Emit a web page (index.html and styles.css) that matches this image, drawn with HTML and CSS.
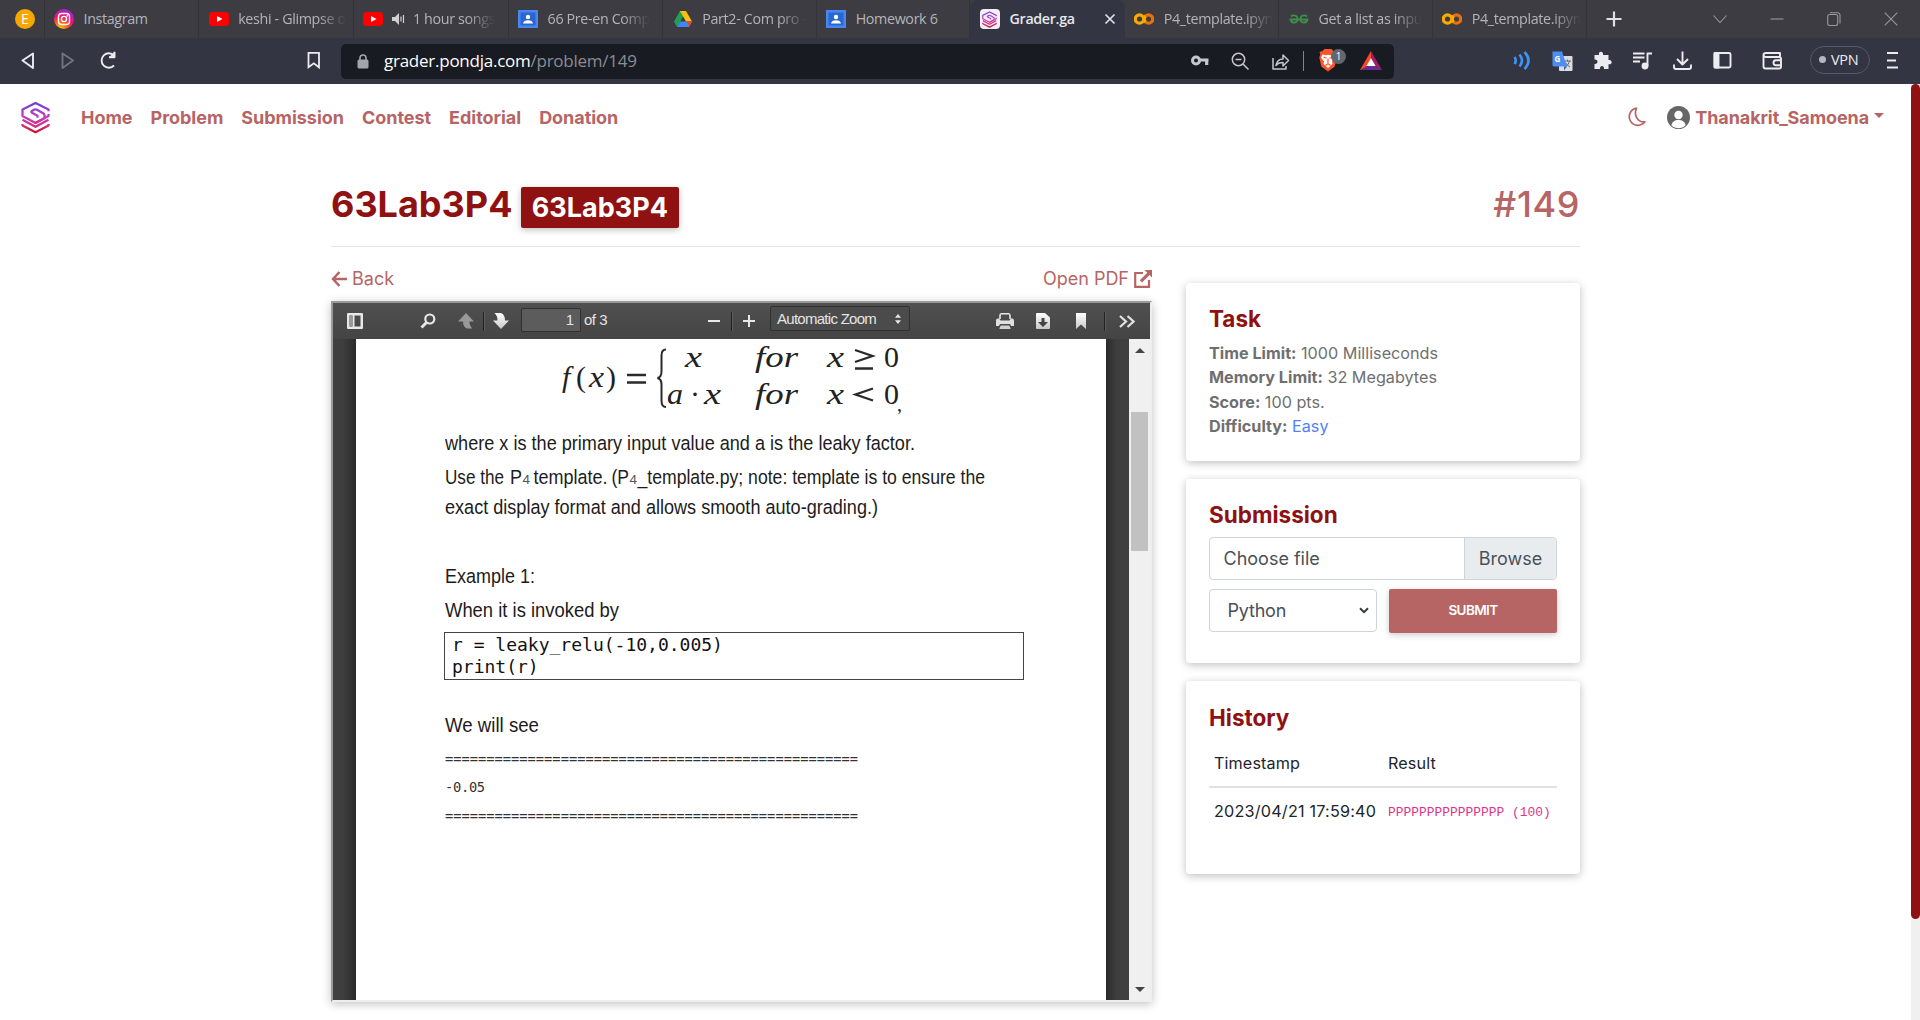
FILE: index.html
```html
<!DOCTYPE html>
<html lang="en">
<head>
<meta charset="utf-8">
<title>Grader.ga</title>
<link rel="stylesheet" href="styles.css">
</head>
<body>
<svg class="defs" width="0" height="0" aria-hidden="true">
  <defs>
    <linearGradient id="logoGrad" x1="0" y1="0" x2="0" y2="32" gradientUnits="userSpaceOnUse"><stop offset="0" stop-color="#6a3fd0"/><stop offset=".5" stop-color="#c43fc0"/><stop offset=".75" stop-color="#d22f7c"/><stop offset="1" stop-color="#c4101c"/></linearGradient>
    <radialGradient id="igGrad" cx=".3" cy="1" r="1.1"><stop offset="0" stop-color="#ffd600"/><stop offset=".35" stop-color="#ff5a1f"/><stop offset=".6" stop-color="#f0107a"/><stop offset="1" stop-color="#8a2be2"/></radialGradient>
    <linearGradient id="btnGrad" x1="0" y1="0" x2="0" y2="1"><stop offset="0" stop-color="#fff"/><stop offset="1" stop-color="#c8c8c8"/></linearGradient>
  </defs>
  <symbol id="logo" viewBox="0 0 29 32"><g fill="none" stroke="url(#logoGrad)" stroke-width="2.300" stroke-linejoin="round"><path d="M27.500 9.800V8L14.500 1.500 1.500 8v6.500l13 7 9-5v-2.800q0-1-1-1.700L16 8.200q-1.500-.8-3 0l-2 1.200q-1.500 1 0 1.800l5.500 3v2"/><path d="M27.500 12.500v2L14.500 21.500"/><path d="M1.500 18.200 14.500 25.300 27.500 18.200"/><path d="M1.500 22.500v1.500L14.500 30.700 27.500 24v-1.500"/></g></symbol>
  <symbol id="youtube" viewBox="0 0 20 20"><rect y="3" width="20" height="14" rx="3.500" fill="#f00"/><path d="M8 7l5.500 3L8 13z" fill="#fff"/></symbol>
  <symbol id="classroom" viewBox="0 0 20 20"><rect y="1" width="20" height="18" fill="#4a86f0"/><rect x="2.500" y="3.500" width="15" height="13" fill="#2a66d0"/><circle cx="10" cy="8" r="2.200" fill="#fff"/><path d="M5 14.500c0-4.500 10-4.500 10 0z" fill="#fff"/></symbol>
  <symbol id="colab" viewBox="0 0 20 20"><g fill="none" stroke-width="3.200"><circle cx="5.500" cy="10" r="4.200" stroke="#f9ab00"/><circle cx="14.500" cy="10" r="4.200" stroke="#e8710a"/><path d="M11.500 13a4.200 4.200 0 0 1 0-6" stroke="#f9ab00"/></g></symbol>
</svg>

<header class="browser">
  <div class="tabs">
    <div class="tab pinned"><span class="letter">E</span></div>
    <div class="tab"><svg class="fav" viewBox="0 0 20 20"><circle cx="10" cy="10" r="10" fill="url(#igGrad)"/><g fill="none" stroke="#fff" stroke-width="1.400"><rect x="4.500" y="4.500" width="11" height="11" rx="3.200"/><circle cx="10" cy="10" r="2.600"/></g><circle cx="13.200" cy="6.900" r=".8" fill="#fff"/></svg><span class="label">Instagram</span></div>
    <div class="tab"><svg class="fav"><use href="#youtube"/></svg><span class="label fade">keshi - Glimpse o</span></div>
    <div class="tab"><svg class="fav"><use href="#youtube"/></svg><svg class="sound" viewBox="0 0 14 14"><path d="M1 5h3l4-4v12L4 9H1z" fill="#d0d0d2"/><path d="M10 4.500v5M12.500 3v8" stroke="#d0d0d2" stroke-width="1.200"/></svg><span class="label fade">1 hour songs</span></div>
    <div class="tab"><svg class="fav"><use href="#classroom"/></svg><span class="label fade">66 Pre-en Comp</span></div>
    <div class="tab narrow"><svg class="fav" viewBox="0 0 20 20"><path d="M7 2h6L7.500 12 4 18 1 12.500z" fill="#22a052"/><path d="M7 2h6l6 10.500h-6z" fill="#ffc107"/><path d="M4 18l3-5.500h12L16 18z" fill="#4285f4"/><path d="M13.500 12.500H19L16 18z" fill="#ea4335"/></svg><span class="label fade">Part2- Com pro -</span></div>
    <div class="tab narrow"><svg class="fav"><use href="#classroom"/></svg><span class="label">Homework 6</span></div>
    <div class="tab active"><span class="logo-tile"><svg width="15" height="17"><use href="#logo"/></svg></span><span class="label">Grader.ga</span><svg class="close" width="12" height="12" viewBox="0 0 12 12"><path d="M1.500 1.500l9 9m0-9l-9 9" stroke="#e2e2e6" stroke-width="1.700"/></svg></div>
    <div class="tab"><svg class="fav"><use href="#colab"/></svg><span class="label fade">P4_template.ipyn</span></div>
    <div class="tab narrow"><svg class="fav" viewBox="0 0 20 20"><g fill="none" stroke="#3d8f49" stroke-width="1.800"><path d="M2 7.500C4 5.500 8.500 6 8.500 10c0 4.500-6 5-7 .5H18.500c-1 4.500-7 4-7-.5 0-4 4.500-4.500 6.500-2.500"/></g></svg><span class="label fade">Get a list as inpu</span></div>
    <div class="tab"><svg class="fav"><use href="#colab"/></svg><span class="label fade">P4_template.ipyn</span></div>
    <svg class="new-tab" width="16" height="16" viewBox="0 0 16 16"><path d="M8 .5v15M.5 8h15" stroke="#e0e0e2" stroke-width="2.200"/></svg>
    <div class="window">
      <svg viewBox="0 0 14 14"><path d="M.5 3.500L7 10.500l6.500-7"/></svg>
      <svg viewBox="0 0 14 14"><path d="M.5 7h13"/></svg>
      <svg viewBox="0 0 14 14"><rect x=".7" y="2.500" width="10" height="11" rx="2"/><path d="M3 .7h7.500a2.500 2.500 0 0 1 2.500 2.500v8.300"/></svg>
      <svg viewBox="0 0 14 14"><path d="M.7.700l12.600 12.600m0-12.600L.7 13.300"/></svg>
    </div>
  </div>
  <div class="toolbar">
    <div class="cells">
      <svg class="cell" viewBox="0 0 40 46"><path d="M25 15.500v14.500L14.500 22.500z"/></svg>
      <svg class="cell dim" viewBox="0 0 40 46"><path d="M14.500 15.500v14.500l10.500-7.500z"/></svg>
      <svg class="cell" viewBox="0 0 40 46"><path d="M26 27.500a7.200 7.200 0 1 1 0-10"/><path d="M26.500 13.800v5.500H21" fill="#ececf0"/></svg>
    </div>
    <svg class="cell bookmark" viewBox="0 0 40 46"><path d="M15.500 14.800h10.500v14.500l-5.200-4-5.300 4z"/></svg>
    <div class="url">
      <svg class="lock" viewBox="0 0 12 15"><rect x=".5" y="5.500" width="11" height="9" rx="1.500" fill="#a4a5ab"/><path d="M3 6V4a3 3 0 0 1 6 0v2" fill="none" stroke="#a4a5ab" stroke-width="1.600"/></svg>
      <span class="address"><b>grader.pondja.com</b>/problem/149</span>
      <div class="cells">
        <svg class="cell" viewBox="0 0 40 46"><g fill="none" stroke="#c6c7cc"><circle cx="16" cy="22.500" r="3.500" stroke-width="3"/><path d="M19 22h9.500M26.700 22v5" stroke-width="3.200"/></g></svg>
        <svg class="cell thin" viewBox="0 0 40 46"><circle cx="18.500" cy="21.500" r="6.200"/><path d="M23 26l5.500 5.500M15.500 21.500h6"/></svg>
        <svg class="cell thin share" viewBox="0 0 40 46"><path d="M14 20v11h13v-3"/><path d="M17 27.500c1-5 4-6.500 7-6.500v-4l5.500 5.500L24 28v-3.500c-3 0-5 .5-7 3z"/></svg>
        <i class="rule"></i>
        <svg class="cell" viewBox="0 0 40 46"><path d="M11.500 14l3-1 2-2h7l2 2 3 1-.8 2.500 1 3-2 9-6.700 5-6.700-5-2-9 1-3z" fill="#fb542b" stroke="none"/><path d="M14.500 16.500l3.500.8 2-.6 2 .6 3.500-.8 1.500 3-3 4 .5 2.500-4.500 4-4.500-4 .5-2.500-3-4z" fill="#fff" stroke="none"/><path d="M15.500 19l3 1.200M24.500 19l-3 1.200M20 20.500v4.500M17.300 27.500l2.700-1.800 2.700 1.800" stroke="#fb542b" stroke-width="1.200"/></svg>
        <span class="count">1</span>
        <svg class="cell" viewBox="0 0 40 46"><path d="M20 13L9 32h11l0-7z" fill="#ff4724" stroke="none"/><path d="M20 13l11 19-7-4-4-8z" fill="#9e1f63" stroke="none"/><path d="M9 32l7-4h8l7 4z" fill="#662d91" stroke="none"/><path d="M20 20l4.600 8h-9.200z" fill="#fff" stroke="none"/></svg>
      </div>
    </div>
    <div class="cells right">
      <svg class="cell" viewBox="0 0 40 46"><g stroke="#3b96f6" stroke-width="2.600"><path d="M12.500 19q2.500 3.500 0 7M17.500 16.500q5 6 0 12M22.500 14q8 8.500 0 17"/></g></svg>
      <svg class="cell" viewBox="0 0 40 46"><rect x="17" y="18" width="13.500" height="15" rx="1" fill="#dcdce0" stroke="none"/><path d="M22 23h7M25.500 21.500v2M23 29q4-2 4.500-6M23.500 24.500q1.500 3 4.500 4.500" stroke="#667" stroke-width="1"/><path d="M22 28.500h3l-3 4z" fill="#3a5fc0" stroke="none"/><path d="M10.500 13.500h9.500l5 15h-13q-1.500 0-1.500-1.500z" fill="#4e8df5" stroke="none"/><text x="12.500" y="24" class="gletter">G</text></svg>
      <svg class="cell" viewBox="0 0 40 46"><path d="M12 18h4.500c-1.200-4.500 5-4.500 4 0H26v5c4-1 4.500 5 0 4.300V32h-4.500c.5-4-4.500-4-4 0H12v-5c4 .5 4-5 0-4.500z" fill="#ececf0" stroke="none" transform="translate(.5 -1)"/></svg>
      <svg class="cell" viewBox="0 0 40 46"><path d="M11 15.500h11.500M11 19.500h11.500M11 23.500h7"/><path d="M25.500 28V15.500H30"/><circle cx="23" cy="28" r="2.500" fill="#ececf0"/></svg>
      <svg class="cell" viewBox="0 0 40 46"><path d="M20.500 13.500v12.500M15 21l5.500 5.500 5.500-5.500M12 26.500v2.500q0 2 2 2h13q2 0 2-2v-2.500"/></svg>
      <svg class="cell" viewBox="0 0 40 46"><rect x="12.500" y="15" width="16" height="14.500" rx="1.500"/><rect x="12.500" y="15" width="4" height="14.500" fill="#ececf0"/></svg>
      <svg class="cell wallet" viewBox="0 0 40 46"><path d="M28 19V15H14q-2.500 0-2.500 2t2.500 2h13q2 0 2 2v8q0 1.500-1.500 1.500H13.500q-2 0-2-2V17"/><path d="M29 22.300h-5a2.300 2.300 0 0 0 0 5h5"/></svg>
      <span class="vpn">VPN</span>
      <svg class="cell" viewBox="0 0 40 46"><path d="M15 15h11M15 22.500h9M15 29.500h11"/></svg>
    </div>
  </div>
</header>

<div class="viewport">
  <div class="site">
    <nav class="nav">
      <svg class="brand" width="29" height="33"><use href="#logo"/></svg>
      <a>Home</a><a>Problem</a><a>Submission</a><a>Contest</a><a>Editorial</a><a>Donation</a>
      <svg class="moon" width="18" height="20" viewBox="0 0 18 20"><path d="M8.500 1.200A8.600 8.600 0 1 0 16.800 14.800C9.500 15.500 5.500 8 8.500 1.200z" fill="none" stroke="#b66464" stroke-width="1.700" stroke-linejoin="round"/></svg>
      <svg class="avatar" width="23" height="23" viewBox="0 0 23 23"><circle cx="11.500" cy="11.500" r="11.500" fill="#666"/><circle cx="11.500" cy="9" r="4.200" fill="#fff"/><path d="M4.500 19.500c0-7.500 14-7.500 14 0-4 3.500-10 3.500-14 0z" fill="#fff"/></svg>
      <a class="user">Thanakrit_Samoena</a><i class="caret"></i>
    </nav>
    <main class="container">
      <div class="heading"><h1>63Lab3P4 <span class="badge">63Lab3P4</span></h1><span class="number">#149</span></div>
      <div class="columns">
        <section class="left">
          <div class="links">
            <a><svg width="16" height="16" viewBox="0 0 16 16"><path d="M8.500 1L2 8l6.500 7M2 8h14" fill="none" stroke="#b66464" stroke-width="2.500"/></svg>Back</a>
            <a>Open PDF<svg width="18" height="18" viewBox="0 0 18 18"><path d="M9 3H1.200v13.800H15V10" fill="none" stroke="#b66464" stroke-width="2.200"/><path d="M10.500 0H18v7.500l-2.500-2.500-7.500 7.500-2.200-2.200L13.300 2.700z" fill="#b66464"/></svg></a>
          </div>
          <div class="pdf">
            <div class="pdf-bar">
              <svg class="i-side" width="16" height="16" viewBox="0 0 16 16"><path fill-rule="evenodd" d="M1 0h14q1 0 1 1v14q0 1-1 1H1q-1 0-1-1V1q0-1 1-1zm1.500 2.500v11h3v-11zm5 0v11h6v-11z" fill="#e8e8e8"/><path d="M2.500 2.500h3v11h-3z" fill="#999"/></svg>
              <svg class="i-find" width="16" height="16" viewBox="0 0 16 16"><circle cx="9.800" cy="6" r="4.500" fill="none" stroke="#e8e8e8" stroke-width="2.200"/><path d="M6.500 9.500L1.500 14.500" stroke="#e8e8e8" stroke-width="2.800"/></svg>
              <svg class="i-up" width="16" height="16" viewBox="0 0 16 16"><path d="M8 0l8 8.500h-4.500q0 4.500 3 7H9q-4-1.500-4-7H0z" fill="#999"/></svg>
              <i class="sep"></i>
              <svg class="i-down" width="16" height="16" viewBox="0 0 16 16"><path d="M8 16l8-8.500h-4q0-6-4-7.500H1.500q3 2.500 3 7.500H0z" fill="url(#btnGrad)"/></svg>
              <span class="page-no">1</span><span class="of">of 3</span>
              <svg class="i-minus" width="12" height="12" viewBox="0 0 12 12"><path d="M0 6h12" stroke="#e8e8e8" stroke-width="2"/></svg>
              <i class="sep"></i>
              <svg class="i-plus" width="12" height="12" viewBox="0 0 12 12"><path d="M0 6h12M6 0v12" stroke="#e8e8e8" stroke-width="2"/></svg>
              <span class="zoom">Automatic Zoom<svg width="6" height="10" viewBox="0 0 6 10"><path d="M0 3.800L3 0l3 3.800zM0 6.200L3 10l3-3.800z" fill="#e8e8e8"/></svg></span>
              <svg class="i-print" width="18" height="16" viewBox="0 0 18 16"><path d="M4 6V2.500Q4 .8 5.500.8h7Q14 .8 14 2.500V6" fill="none" stroke="#e8e8e8" stroke-width="1.600"/><path d="M2 5.500h1.200l1.300 2h9l1.300-2H16q2 0 2 2V13h-3l-1-2H4l-1 2H0V7.500q0-2 2-2z" fill="#e0e0e0"/><path d="M3.500 15l1.300-2.500h8.400l1.300 2.500v1h-11z" fill="#d0d0d0"/></svg>
              <svg class="i-save" width="14" height="16" viewBox="0 0 14 16"><path d="M1 0h8l5 4.500V15q0 1-1 1H1q-1 0-1-1V1q0-1 1-1z" fill="url(#btnGrad)"/><path d="M5.500 5h3v4H12l-5 5-5-5h3.500z" fill="#444"/></svg>
              <svg class="i-mark" width="10" height="16" viewBox="0 0 10 16"><path d="M0 0h10v16l-5-4.500L0 16z" fill="url(#btnGrad)"/></svg>
              <i class="sep"></i>
              <svg class="i-more" width="16" height="13" viewBox="0 0 16 13"><path d="M1 1l6 5.500L1 12M8.500 1l6 5.500-6 5.500" fill="none" stroke="#e0e0e0" stroke-width="2.300"/></svg>
            </div>
            <div class="pdf-body">
              <article class="sheet">
                <svg class="formula" width="360" height="86" viewBox="550 339 360 86">
                  <g class="math">
                    <text x="562" y="387">f</text><text class="up" x="576" y="387">(</text><text x="589" y="387" textLength="15" lengthAdjust="spacingAndGlyphs">x</text><text class="up" x="606" y="387">)</text>
                    <text x="685" y="367" textLength="17" lengthAdjust="spacingAndGlyphs">x</text><text x="755" y="367" textLength="43" lengthAdjust="spacingAndGlyphs">for</text><text x="827" y="367" textLength="17" lengthAdjust="spacingAndGlyphs">x</text><text class="up" x="884" y="367">0</text>
                    <text x="667" y="404" textLength="16" lengthAdjust="spacingAndGlyphs">a</text><text class="up" x="690" y="404">·</text><text x="704" y="404" textLength="17" lengthAdjust="spacingAndGlyphs">x</text><text x="755" y="404" textLength="43" lengthAdjust="spacingAndGlyphs">for</text><text x="827" y="404" textLength="17" lengthAdjust="spacingAndGlyphs">x</text><text class="up" x="884" y="404">0</text>
                    <text class="comma" x="897" y="411">,</text>
                  </g>
                  <g fill="none" stroke="#2a2a2a" stroke-width="2.300"><path d="M627 375h19M627 382.500h19"/><path d="M855 350l17.500 6-17.500 6M855 368.500h18M873 388.500l-17.500 6 17.500 6"/><path d="M666 349.500q-4.500 0-4.500 6v16q0 5.500-4 6.500 4 1 4 6.500v16q0 6.500 4.500 6.500" stroke-width="2"/></g>
                </svg>
                <svg class="line l1" viewBox="0 0 600 28"><text x="0" y="20" textLength="470" lengthAdjust="spacingAndGlyphs">where x is the primary input value and a is the leaky factor.</text></svg>
                <svg class="line l2" viewBox="0 0 600 28"><text x="0" y="20" textLength="59" lengthAdjust="spacingAndGlyphs">Use the</text><text x="65" y="20" textLength="12" lengthAdjust="spacingAndGlyphs">P</text><text class="four" x="77.500" y="20">4</text><text x="88.500" y="20" textLength="74" lengthAdjust="spacingAndGlyphs">template.</text><text x="166.500" y="20" textLength="17.500" lengthAdjust="spacingAndGlyphs">(P</text><text class="four" x="184.500" y="20">4</text><text x="192.500" y="20" textLength="347.500" lengthAdjust="spacingAndGlyphs">_template.py; note: template is to ensure the</text></svg>
                <svg class="line l3" viewBox="0 0 600 28"><text x="0" y="20" textLength="433" lengthAdjust="spacingAndGlyphs">exact display format and allows smooth auto-grading.)</text></svg>
                <svg class="line l4" viewBox="0 0 600 28"><text x="0" y="20" textLength="90" lengthAdjust="spacingAndGlyphs">Example 1:</text></svg>
                <svg class="line l5" viewBox="0 0 600 28"><text x="0" y="20" textLength="174" lengthAdjust="spacingAndGlyphs">When it is invoked by</text></svg>
                <pre class="code">r = leaky_relu(-10,0.005)
print(r)</pre>
                <svg class="line l6" viewBox="0 0 600 28"><text x="0" y="20" textLength="94" lengthAdjust="spacingAndGlyphs">We will see</text></svg>
                <pre class="out">==================================================
<span>-0.05</span>
==================================================</pre>
              </article>
              <div class="pdf-scroll"><i class="arrow up"></i><i class="thumb"></i><i class="arrow down"></i></div>
            </div>
          </div>
        </section>
        <aside class="right-col">
          <section class="card task"><h5>Task</h5><p><b>Time Limit:</b> 1000 Milliseconds</p><p><b>Memory Limit:</b> 32 Megabytes</p><p><b>Score:</b> 100 pts.</p><p><b>Difficulty:</b> <span class="easy">Easy</span></p></section>
          <section class="card submission"><h5>Submission</h5>
            <div class="file"><span>Choose file</span><span class="browse">Browse</span></div>
            <div class="row"><div class="select">Python<svg width="10" height="7" viewBox="0 0 10 7"><path d="M1 1.200l4 4 4-4" fill="none" stroke="#343a40" stroke-width="2"/></svg></div><div class="submit">SUBMIT</div></div>
          </section>
          <section class="card history"><h5>History</h5>
            <div class="tr head"><span>Timestamp</span><span>Result</span></div>
            <div class="tr"><span>2023/04/21 17:59:40</span><code>PPPPPPPPPPPPPPP (100)</code></div>
          </section>
        </aside>
      </div>
    </main>
  </div>
  <div class="page-scroll"><i></i></div>
</div>
</body>
</html>
```
FILE: styles.css
```css
* { box-sizing: border-box; }
body { margin: 0; width: 1920px; height: 1020px; overflow: hidden; background: #fff; font-family: Inter, sans-serif; font-size: 18px; color: #212529; }
.defs { position: absolute; }
svg { flex: none; display: block; }

/* Browser chrome */
.browser { font-family: "Open Sans", sans-serif; }
.tabs { display: flex; height: 38px; background: #3d3c43; align-items: center; }
.tab { display: flex; align-items: center; width: 154.700px; height: 38px; padding-left: 9.500px; padding-right: 2px; border-right: 1px solid #34333a; flex: none; }
.tab.narrow { width: 153.400px; }
.tab.pinned { width: 44.500px; padding-left: 15px; }
.tab.active { background: #333542; border-radius: 8px 8px 0 0; border: 0; padding-right: 9px; }
.letter { width: 20px; height: 20px; border-radius: 50%; background: #f6a800; color: #fff; font-size: 14px; line-height: 20px; text-align: center; }
.fav { width: 20px; height: 20px; margin-right: 9.500px; }
.sound { width: 14px; height: 14px; margin: 0 8px 0 -2px; }
.label { flex: 1; min-width: 0; white-space: nowrap; font-size: 14.300px; line-height: 22px; letter-spacing: -.35px; color: #b4b4b8; }
.fade { flex: none; -webkit-mask-image: linear-gradient(90deg, #000 calc(100% - 28px), transparent); mask-image: linear-gradient(90deg, #000 calc(100% - 28px), transparent); }
.active .label { font-weight: 600; color: #e6e6ea; }
.logo-tile { width: 20px; height: 20px; margin-right: 10px; border-radius: 4px; background: #f4eef6; display: flex; align-items: center; justify-content: center; }
.new-tab { margin-left: 19px; }
.window { display: flex; margin-left: auto; gap: 43px; padding-right: 22px; }
.window svg { width: 14px; height: 14px; fill: none; stroke: #98989c; stroke-width: 1.100; }
.toolbar { display: flex; height: 46px; background: #333542; align-items: center; padding: 0 8px; }
.cells { display: flex; align-items: center; }
.cell { width: 40px; height: 46px; fill: none; stroke: #ececf0; stroke-width: 1.900; stroke-linejoin: round; }
.cell.dim { stroke: #72737e; }
.cell.thin { stroke: #c6c7cc; stroke-width: 1.500; }
.cell.bookmark { margin-left: 165px; margin-right: 8px; stroke-width: 1.800; stroke-linejoin: miter; }
.url { width: 1053px; height: 35px; background: #191b22; border-radius: 5px; display: flex; align-items: center; padding: 0 3px 0 16px; }
.lock { width: 12px; height: 15px; margin-right: 15px; }
.address { flex: 1; font-size: 17px; letter-spacing: -.25px; line-height: 30px; color: #8b8c94; white-space: nowrap; }
.address b { font-weight: 400; color: #fff; }
.share { margin: 0 -1px; }
.rule { width: 1px; height: 20px; background: #83848b; margin: 0 4px 0 5px; }
.count { width: 15px; height: 15px; border-radius: 8px; background: #63656f; color: #fff; font-size: 10px; line-height: 15px; text-align: center; margin: -9px 5px 0 -17px; z-index: 1; }
.cells.right { margin-left: auto; }
.gletter { font: 700 8px "Open Sans", sans-serif; fill: #fff; stroke: none; }
.wallet { margin-left: 10px; }
.vpn { width: 60px; height: 28px; margin: -2px 2px 0 18px; border: 1.500px solid #585a6a; border-radius: 14px; display: flex; align-items: center; gap: 5px; padding: 0 0 1px 8px; font-size: 14.500px; color: #ececf0; letter-spacing: -.3px; }
.vpn::before { content: ""; width: 7px; height: 7px; border-radius: 50%; background: #b4b6c4; }

/* Site */
.viewport { display: flex; height: 936px; }
.site { width: 1911px; }
.page-scroll { width: 9px; background: #f0f0f0; }
.page-scroll i { display: block; height: 835px; background: #8f1111; border-radius: 5px; }
.nav { display: flex; align-items: center; height: 66px; padding: 0 27px 0 21px; font-weight: 700; color: #b66464; }
.nav a { line-height: 27px; margin-right: 18px; letter-spacing: -.03px; }
.brand { margin-right: 31px; }
.moon { margin-left: auto; margin-right: 21px; }
.avatar { margin-right: 5px; }
.nav .user { margin-right: 5px; letter-spacing: -.1px; }
.caret { border: 5px solid transparent; border-top-color: #b66464; border-bottom: 0; margin-top: -3px; }
.container { width: 1249px; margin-left: 331px; padding-top: 32px; }
.heading { display: flex; justify-content: space-between; height: 65px; border-bottom: 1px solid #e5e5e5; font-size: 36px; line-height: 44px; }
h1 { margin: 0; height: 44px; font-size: 36px; font-weight: 700; color: #8f1111; white-space: nowrap; }
.badge { display: inline-block; height: 41px; padding: 0 10.800px; background: #8f1111; color: #fff; font-size: 27px; line-height: 41px; font-weight: 700; border-radius: 2px; box-shadow: 0 2px 6px rgba(0,0,0,.25); }
.number { color: #b66464; font-weight: 500; letter-spacing: .6px; }
.columns { display: flex; gap: 34px; padding-top: 18px; }
.left { width: 821px; }
.links { display: flex; justify-content: space-between; height: 27px; line-height: 27px; color: #b66464; margin-bottom: 9px; }
.links a { display: flex; align-items: center; gap: 5px; }

/* Document viewer */
.pdf { height: 701px; border: 2px solid #9a9a9a; border-right-color: #eee; border-bottom-color: #eee; box-shadow: 0 2px 9px rgba(0,0,0,.25); display: flex; flex-direction: column; }
.pdf-bar { height: 36px; background: linear-gradient(#505050, #444); display: flex; align-items: center; padding-left: 14px; font: 15px "Liberation Sans", Arial, sans-serif; color: #e4e4e4; flex: none; }
.sep { width: 1px; height: 19px; background: #222; box-shadow: 1px 0 #5c5c5c; }
.i-find { margin-left: 57px; }
.i-up { margin: 0 9px 0 22px; }
.i-down { margin: 0 12px 0 9px; }
.page-no { width: 60px; height: 24px; background: #5c5c5c; border: 1px solid #303030; border-radius: 2px; line-height: 21px; text-align: right; padding-right: 6px; margin-top: -2px; }
.of { width: 23px; margin: -3px 101px 0 3px; white-space: nowrap; letter-spacing: -.5px; }
.i-minus { margin-right: 11px; }
.i-plus { margin: 0 15px 0 11px; }
.zoom { width: 140px; height: 25px; border: 1px solid #303030; border-radius: 2px; background: #4b4b4b; display: flex; align-items: center; justify-content: space-between; padding: 0 8px 0 6px; margin: -5px 86px 0 0; white-space: nowrap; letter-spacing: -.72px; }
.i-print { margin-right: 22px; }
.i-save { margin-right: 26px; }
.i-mark { margin-right: 18px; }
.i-more { margin-left: 14px; }
.pdf-body { flex: 1; display: flex; background: linear-gradient(90deg, #404040 0, #3e3e3e 10px, #2a2a2a 23px, #2a2a2a 773px, #3e3e3e 783px, #404040); padding-left: 23px; }
.sheet { width: 750px; background: #fff; display: flex; flex-direction: column; padding-left: 89px; margin-right: 23px; }
.formula { margin-left: 105px; }
.math { font: italic 30px "Liberation Serif", serif; fill: #222; }
.math .up { font-style: normal; }
.math .comma { font-size: 20px; font-style: normal; }
.line { width: 600px; height: 28px; font: 20.500px "Liberation Sans", Arial, sans-serif; fill: #1c1c1c; }
.four { font-size: 13.500px; fill: #555; }
.l1 { margin-top: 5px; }
.l2 { margin-top: 6px; }
.l3 { margin-top: 2px; }
.l4 { margin-top: 41px; }
.l5 { margin-top: 6px; }
.code { width: 580px; height: 48px; margin: 7px 0 0 -1px; padding: 1px 0 0 7px; border: 1px solid #444; font: 18px/22px "DejaVu Sans Mono", monospace; color: #111; }
.l6 { margin-top: 32px; }
.out { margin: 5px 0 0; font: 13.720px/28.500px "DejaVu Sans Mono", monospace; color: #333; }
.out span { position: relative; top: -1px; letter-spacing: -.3px; }
.pdf-scroll { width: 21px; background: #f0f0f0; display: flex; flex-direction: column; align-items: center; }
.arrow { border: 5px solid transparent; }
.arrow.up { border-top: 0; border-bottom-color: #444; margin-top: 9px; }
.arrow.down { border-bottom: 0; border-top-color: #444; margin: auto 0 8px; }
.thumb { width: 17px; height: 139px; background: #c1c1c1; margin-top: 59px; }

/* Cards */
.right-col { width: 394px; display: flex; flex-direction: column; gap: 18px; padding-top: 18px; }
.card { border-radius: 4px; box-shadow: 0 2px 9px rgba(0,0,0,.25); padding: 22px 23px 0; }
.task { height: 178px; }
.submission { height: 184px; }
.history { height: 193px; }
h5 { margin: 0 0 9px; font-size: 22.500px; line-height: 27px; font-weight: 700; color: #8f1111; }
.card p { margin: 0; font-size: 16.200px; line-height: 24.300px; color: #6f6f6f; }
.card b { font-weight: 700; }
.easy { color: #5382f5; }
.file { display: flex; justify-content: space-between; height: 43px; border: 1px solid #ced4da; border-radius: 4px; line-height: 41px; padding-left: 13.500px; color: #495057; overflow: hidden; }
.browse { width: 92px; background: #e9ecef; border-left: 1px solid #ced4da; text-align: center; }
.row { display: flex; gap: 12px; margin-top: 9px; }
.select { width: 168px; height: 43px; border: 1px solid #ced4da; border-radius: 4px; display: flex; align-items: center; justify-content: space-between; padding: 0 7px 0 17.500px; color: #495057; letter-spacing: -.2px; }
.submit { width: 168px; height: 44px; background: #b66464; color: #fff; border-radius: 2px; font-size: 13.500px; font-weight: 600; letter-spacing: -.6px; line-height: 43px; text-align: center; box-shadow: 0 2px 6px rgba(0,0,0,.2); }
.history h5 { margin-top: 1px; margin-bottom: 0; }
.tr { display: flex; height: 45px; padding-left: 5px; font-size: 16.200px; line-height: 47px; letter-spacing: .2px; white-space: nowrap; }
.tr.head { height: 57px; line-height: 64px; letter-spacing: .1px; border-bottom: 2px solid #dee2e6; }
.tr > :first-child { width: 174px; flex: none; }
code { font: 12.900px/50px "Liberation Mono", monospace; letter-spacing: .02px; color: #e0338a; }
```
